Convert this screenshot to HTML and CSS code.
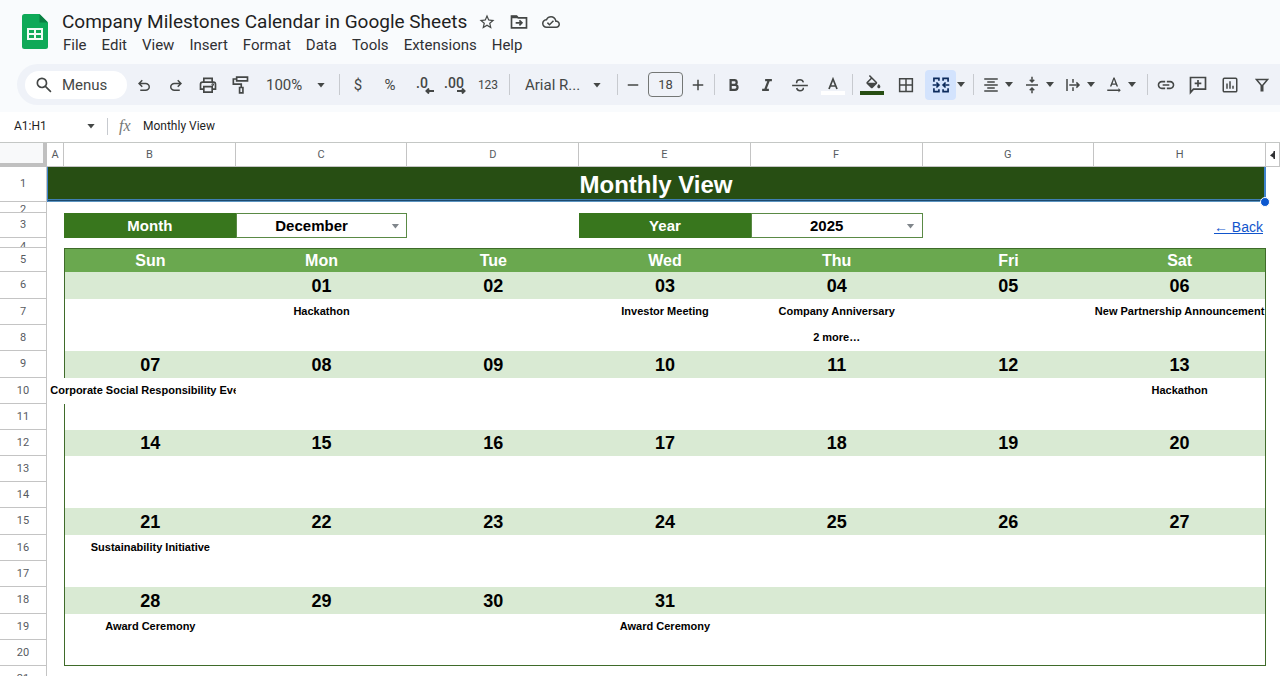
FILE: index.html
```html
<!DOCTYPE html>
<html lang="en">
<head>
<meta charset="utf-8">
<meta name="viewport" content="width=device-width, initial-scale=1">
<title>Company Milestones Calendar in Google Sheets</title>
<link rel="stylesheet" href="styles.css">
</head>
<body>
<header class="top">
  <svg class="logo" viewBox="0 0 26 35" aria-hidden="true"><path fill="#0fa958" d="M2.500 0H17.500L26 8.500V32.500Q26 35 23.500 35H2.500Q0 35 0 32.500V2.500Q0 0 2.500 0Z"/><path fill="#0b8043" d="M17.500 0L26 8.500H17.500Z"/><path fill="#f1fbf5" fill-rule="evenodd" d="M5 14H21V26H5ZM7 16V19H12V16ZM14 16V19H19V16ZM7 21V24H12V21ZM14 21V24H19V21Z"/></svg>
  <div class="heading">
    <div class="title-row">
      <h1 class="title">Company Milestones Calendar in Google Sheets</h1>
      <button class="title-btn" aria-label="Star"><svg class="i18" viewBox="0 0 24 24"><path d="M22 9.240l-7.190-.62L12 2 9.190 8.630 2 9.240l5.460 4.730L5.820 21 12 17.270 18.180 21l-1.630-7.030L22 9.240zM12 15.400l-3.760 2.270 1-4.280-3.320-2.880 4.380-.38L12 6.100l1.710 4.040 4.380.38-3.320 2.880 1 4.280L12 15.400z"/></svg></button>
      <button class="title-btn" aria-label="Move"><svg class="i20 line" viewBox="0 0 24 24"><path d="M3 5H9L11 7H21V19H3Z"/><path d="M3 6H10" stroke-width="3"/><path d="M8 13H15M12.500 10L15.500 13L12.500 16"/></svg></button>
      <button class="title-btn" aria-label="Saved to Drive"><svg class="i18" viewBox="0 0 24 24"><path d="M19.350 10.040C18.670 6.590 15.640 4 12 4 9.110 4 6.600 5.640 5.350 8.040 2.340 8.360 0 10.910 0 14c0 3.310 2.690 6 6 6h13c2.760 0 5-2.240 5-5 0-2.640-2.050-4.780-4.650-4.960zM19 18H6c-2.210 0-4-1.790-4-4 0-2.050 1.530-3.760 3.560-3.970l1.070-.11.5-.95C8.080 7.140 9.940 6 12 6c2.620 0 4.880 1.860 5.390 4.430l.3 1.500 1.530.11c1.560.1 2.780 1.410 2.780 2.960 0 1.650-1.350 3-3 3zm-9-3.820l-2.090-2.090L6.500 13.500 10 17l6.010-6.010-1.410-1.410z"/></svg></button>
    </div>
    <nav class="menus">
      <button>File</button><button>Edit</button><button>View</button><button>Insert</button><button>Format</button><button>Data</button><button>Tools</button><button>Extensions</button><button>Help</button>
    </nav>
  </div>
</header>

<div class="toolbar" role="toolbar" aria-label="Main">
  <button class="search"><svg class="i20" viewBox="0 0 24 24"><path d="M19.600 21l-6.300-6.300q-.75.6-1.725.95T9.500 16q-2.725 0-4.612-1.888T3 9.500t1.888-4.612T9.500 3t4.613 1.888T16 9.500q0 1.100-.35 2.075T14.700 13.300l6.300 6.300zM9.500 14q1.875 0 3.188-1.312T14 9.500t-1.312-3.187T9.500 5T6.313 6.313T5 9.500t1.313 3.188T9.500 14"/></svg>Menus</button>
  <button class="tb" aria-label="Undo"><svg class="i18" viewBox="0 0 24 24"><path d="M7 20v-2h7.100q1.575 0 2.738-1T18 14.500T16.838 12T14.100 11H7.800l2.600 2.600L9 15L4 10l5-5l1.400 1.400L7.800 9h6.300q2.425 0 4.163 1.575T20 14.500t-1.737 3.925T14.100 20z"/></svg></button>
  <button class="tb" aria-label="Redo"><svg class="i18 flip" viewBox="0 0 24 24"><path d="M7 20v-2h7.100q1.575 0 2.738-1T18 14.500T16.838 12T14.100 11H7.800l2.600 2.600L9 15L4 10l5-5l1.400 1.400L7.800 9h6.300q2.425 0 4.163 1.575T20 14.500t-1.737 3.925T14.100 20z"/></svg></button>
  <button class="tb" aria-label="Print"><svg class="i20 line" viewBox="0 0 24 24"><path d="M7 8V4H17V8M7 17H3V11Q3 8.500 5.500 8.500H18.500Q21 8.500 21 11V17H17M7 14H17V20.500H7Z"/><circle cx="17.700" cy="11.500" r=".6"/></svg></button>
  <button class="tb" aria-label="Paint format"><svg class="i20 line" viewBox="0 0 24 24"><path d="M8 2.500H21V7H8ZM8 4.800H4V11H13.500V15M11.500 15H15.500V21.500H11.500Z"/></svg></button>
  <label class="pick zoom"><select aria-label="Zoom"><option>100%</option></select></label>
  <span class="sep"></span>
  <button class="tb txt">$</button>
  <button class="tb txt">%</button>
  <button class="tb dec" aria-label="Decrease decimal places">.0<svg viewBox="0 0 9 6"><path d="M9 3H2M4 .5L1.500 3L4 5.500"/></svg></button>
  <button class="tb dec" aria-label="Increase decimal places">.00<svg viewBox="0 0 9 6"><path d="M0 3H7M5 .5L7.500 3L5 5.500"/></svg></button>
  <button class="tb num">123</button>
  <span class="sep"></span>
  <label class="pick font"><select aria-label="Font"><option>Arial R...</option></select></label>
  <span class="sep"></span>
  <button class="tb step" aria-label="Decrease font size"><svg class="i18 line" viewBox="0 0 24 24"><path d="M5 12H19"/></svg></button>
  <input class="size" type="text" value="18" aria-label="Font size">
  <button class="tb step" aria-label="Increase font size"><svg class="i18 line" viewBox="0 0 24 24"><path d="M5 12H19M12 5V19"/></svg></button>
  <span class="sep"></span>
  <button class="tb mid" aria-label="Bold"><svg class="i18 line thick" viewBox="0 0 24 24"><path d="M7.500 5.500H12.500A3 3 0 0 1 12.500 11.700H7.500ZM7.500 11.700H13.300A3.400 3.400 0 0 1 13.300 18.500H7.500Z"/></svg></button>
  <button class="tb mid" aria-label="Italic"><svg class="i18 line thick" viewBox="0 0 24 24"><path d="M9.500 5.500H18.500M5.500 18.500H14.500M14.500 5.500L9.500 18.500"/></svg></button>
  <button class="tb mid" aria-label="Strikethrough"><svg class="i18 line" viewBox="0 0 24 24"><path d="M1.500 12.500H22.500M16.500 8.500Q15.500 5 12 5Q7.500 5 7.500 8.500V9.500M7.500 16Q8.500 19.500 12 19.500Q16.500 19.500 16.500 15.500"/></svg></button>
  <button class="tb mid colour" aria-label="Text color"><svg viewBox="0 0 24 20"><path d="M8 14L12 4L16 14M9.500 11H14.500" fill="none" stroke="#444746" stroke-width="1.700"/><rect class="swatch-text" x="0" y="16" width="24" height="4"/></svg></button>
  <span class="sep"></span>
  <button class="tb wide colour" aria-label="Fill color"><svg viewBox="0 0 24 20"><path transform="translate(4 0) scale(.78)" d="M16.560 8.940L7.620 0 6.210 1.410l2.380 2.380-5.150 5.150c-.59.59-.59 1.540 0 2.120l5.500 5.500c.29.29.68.44 1.060.44s.77-.15 1.060-.44l5.500-5.500c.59-.58.59-1.530 0-2.120zM5.210 10L10 5.210 14.790 10H5.210zM19 11.500s-2 2.170-2 3.500c0 1.100.9 2 2 2s2-.9 2-2c0-1.330-2-3.500-2-3.500z"/><rect class="swatch-fill" x="0" y="16" width="24" height="4"/></svg></button>
  <button class="tb wide" aria-label="Borders"><svg class="i18 line" viewBox="0 0 24 24"><path d="M3.500 3.500H20.500V20.500H3.500ZM12 3.500V20.500M3.500 12H20.500"/></svg></button>
  <button class="merge" aria-label="Merge cells"><svg class="i20 line" viewBox="0 0 24 24"><path d="M9.500 7V4H3.500V8M3.500 16V20H9.500V17M14.500 7V4H20.500V8M20.500 16V20H14.500V17M2 12H9M6.500 9L9.500 12L6.500 15M22 12H15M17.500 9L14.500 12L17.500 15"/></svg></button>
  <button class="caret" aria-label="Merge type"></button>
  <span class="sep far"></span>
  <button class="combo" aria-label="Horizontal align"><svg class="i18" viewBox="0 0 24 24"><path d="M7 15v2h10v-2H7zm-4 6h18v-2H3v2zm0-8h18v-2H3v2zm4-6v2h10V7H7zM3 3v2h18V3H3z"/></svg></button>
  <button class="combo" aria-label="Vertical align"><svg class="i18 line" viewBox="0 0 24 24"><path d="M4 12H20M12 1V8M9 5L12 8L15 5M12 23V16M9 19L12 16L15 19"/></svg></button>
  <button class="combo" aria-label="Text wrapping"><svg class="i18 line" viewBox="0 0 24 24"><path d="M4 4V20M12 4V9M12 15V20M7 12H19M16.500 8.500L20 12L16.500 15.500"/></svg></button>
  <button class="combo" aria-label="Text rotation"><svg class="i18" viewBox="0 0 24 24"><path d="M21 19l-3-3v2H3v2h15v2l3-3zM9.500 11.800h5l.9 2.200h2.100L12.750 2h-1.500L6.500 14h2.100l.9-2.200zM12 4.500L13.870 10h-3.740L12 4.500z"/></svg></button>
  <span class="sep far"></span>
  <button class="tb" aria-label="Insert link"><svg class="i20" viewBox="0 0 24 24"><path d="M3.900 12c0-1.710 1.390-3.100 3.100-3.100h4V7H7c-2.760 0-5 2.240-5 5s2.240 5 5 5h4v-1.900H7c-1.710 0-3.100-1.390-3.100-3.100zM8 13h8v-2H8v2zm9-6h-4v1.900h4c1.710 0 3.100 1.390 3.100 3.100s-1.390 3.100-3.100 3.100h-4V17h4c2.760 0 5-2.240 5-5s-2.240-5-5-5z"/></svg></button>
  <button class="tb" aria-label="Insert comment"><svg class="i20 line" viewBox="0 0 24 24"><path d="M3 21V3H21V17H6.500ZM12 6V14M8 10H16"/></svg></button>
  <button class="tb" aria-label="Insert chart"><svg class="i18 line" viewBox="0 0 24 24"><path d="M4.500 3H19.500Q21 3 21 4.500V19.500Q21 21 19.500 21H4.500Q3 21 3 19.500V4.500Q3 3 4.500 3ZM8 10V17M12 7V17M16 13V17"/></svg></button>
  <button class="tb" aria-label="Create a filter"><svg class="i18 line" viewBox="0 0 24 24"><path d="M4.500 4.500H19.500L13 12.500V19.500H11V12.500Z"/></svg></button>
</div>

<div class="formula">
  <input class="name-box" type="text" value="A1:H1" aria-label="Name box">
  <button class="caret" aria-label="Named ranges"></button>
  <span class="formula-sep"></span>
  <label class="fx" for="formula">fx</label>
  <input class="formula-input" id="formula" type="text" value="Monthly View">
</div>

<main class="sheet">
<table class="grid">
  <colgroup><col class="c-head"><col class="c-a"><col><col><col><col><col><col><col><col class="c-i"></colgroup>
  <thead>
    <tr class="letters"><td class="corner"></td><th>A</th><th>B</th><th>C</th><th>D</th><th>E</th><th>F</th><th>G</th><th>H</th><th><svg class="hidden-col" viewBox="0 0 6 8" role="img" aria-label="Hidden columns"><path d="M4 1V7L0 4.500Z"/><path d="M3.500 0H5V8H3.500Z"/></svg></th></tr>
  </thead>
  <tbody>
    <tr class="r-title"><th>1</th><td colspan="8" class="banner">Monthly View<span class="handle"></span></td><td></td></tr>
    <tr class="r-gap"><th><div class="cut">2</div></th><td colspan="9"></td></tr>
    <tr class="r-pick"><th>3</th><td></td><td class="lab">Month</td><td class="sel"><label class="pick"><select aria-label="Month"><option>December</option></select></label></td><td></td><td class="lab">Year</td><td class="sel"><label class="pick"><select aria-label="Year"><option>2025</option></select></label></td><td></td><td class="back"><a href="#">← Back</a></td><td></td></tr>
    <tr class="r-gap small"><th><div class="cut">4</div></th><td colspan="9"></td></tr>
    <tr class="r-days"><th>5</th><td></td><td class="first">Sun</td><td>Mon</td><td>Tue</td><td>Wed</td><td>Thu</td><td>Fri</td><td class="last">Sat</td><td></td></tr>
    <tr class="r-date tall"><th>6</th><td></td><td class="first"></td><td>01</td><td>02</td><td>03</td><td>04</td><td>05</td><td class="last">06</td><td></td></tr>
    <tr class="r-event"><th>7</th><td></td><td class="first"></td><td>Hackathon</td><td></td><td>Investor Meeting</td><td>Company Anniversary</td><td></td><td class="last">New Partnership Announcement</td><td></td></tr>
    <tr class="r-event"><th>8</th><td></td><td class="first"></td><td></td><td></td><td></td><td>2 more…</td><td></td><td class="last"></td><td></td></tr>
    <tr class="r-date tall"><th>9</th><td></td><td class="first">07</td><td>08</td><td>09</td><td>10</td><td>11</td><td>12</td><td class="last">13</td><td></td></tr>
    <tr class="r-event"><th>10</th><td></td><td class="spill"><div>Corporate Social Responsibility Event</div></td><td></td><td></td><td></td><td></td><td></td><td class="last">Hackathon</td><td></td></tr>
    <tr class="r-event"><th>11</th><td></td><td class="first"></td><td></td><td></td><td></td><td></td><td></td><td class="last"></td><td></td></tr>
    <tr class="r-date"><th>12</th><td></td><td class="first">14</td><td>15</td><td>16</td><td>17</td><td>18</td><td>19</td><td class="last">20</td><td></td></tr>
    <tr class="r-event"><th>13</th><td></td><td class="first"></td><td></td><td></td><td></td><td></td><td></td><td class="last"></td><td></td></tr>
    <tr class="r-event"><th>14</th><td></td><td class="first"></td><td></td><td></td><td></td><td></td><td></td><td class="last"></td><td></td></tr>
    <tr class="r-date tall"><th>15</th><td></td><td class="first">21</td><td>22</td><td>23</td><td>24</td><td>25</td><td>26</td><td class="last">27</td><td></td></tr>
    <tr class="r-event"><th>16</th><td></td><td class="first">Sustainability Initiative</td><td></td><td></td><td></td><td></td><td></td><td class="last"></td><td></td></tr>
    <tr class="r-event"><th>17</th><td></td><td class="first"></td><td></td><td></td><td></td><td></td><td></td><td class="last"></td><td></td></tr>
    <tr class="r-date tall"><th>18</th><td></td><td class="first">28</td><td>29</td><td>30</td><td>31</td><td></td><td></td><td class="last"></td><td></td></tr>
    <tr class="r-event"><th>19</th><td></td><td class="first">Award Ceremony</td><td></td><td></td><td>Award Ceremony</td><td></td><td></td><td class="last"></td><td></td></tr>
    <tr class="r-event end"><th>20</th><td></td><td class="first"></td><td></td><td></td><td></td><td></td><td></td><td class="last"></td><td></td></tr>
    <tr class="r-event"><th>21</th><td colspan="9"></td></tr>
  </tbody>
</table>
</main>
</body>
</html>
```
FILE: styles.css
```css
* { box-sizing: border-box; }

body {
  margin: 0;
  height: 100vh;
  display: flex;
  flex-direction: column;
  overflow: hidden;
  background: #f9fbfd;
  color: #1f1f1f;
  font-family: Roboto, "Liberation Sans", sans-serif;
}

button, input, select {
  margin: 0;
  padding: 0;
  border: 0;
  background: none;
  color: inherit;
  font: inherit;
}

select { appearance: none; }

svg { display: block; fill: #444746; flex: none; }
.i18 { width: 18px; height: 18px; }
.i20 { width: 20px; height: 20px; }
.line { fill: none; stroke: #444746; stroke-width: 2; }
.thick { stroke-width: 3; }
.flip { transform: scaleX(-1); }

/* Title and menus */
.top { display: flex; gap: 14px; padding: 10px 22px 0; }
.logo { width: 26px; height: 35px; margin-top: 4px; }
.title-row { display: flex; align-items: center; height: 24px; }
.title { margin: 0 11px 0 0; font-size: 19px; font-weight: 400; line-height: 24px; white-space: nowrap; }
.title-btn { margin-right: 13px; }
.menus { display: flex; gap: 15px; height: 30px; padding: 1px 0 0 1px; align-items: flex-start; }
.menus button { font-size: 15px; line-height: 20px; color: #303134; }

/* Toolbar */
.toolbar {
  display: flex;
  align-items: center;
  flex: none;
  height: 41px;
  margin-left: 17px;
  padding-left: 8px;
  background: #eff2f8;
  border-radius: 21px 0 0 21px;
  color: #444746;
  overflow: hidden;
}
.search {
  display: flex;
  align-items: center;
  gap: 8px;
  width: 102px;
  height: 28px;
  margin-right: 1px;
  padding-left: 9px;
  border-radius: 14px;
  background: #fff;
  font-size: 15px;
}
.tb { display: flex; flex: none; align-items: center; justify-content: center; width: 32px; height: 30px; }
.txt { font-size: 15px; }
.num { width: 36px; font-size: 12px; }
.step { width: 26px; }
.mid { width: 33px; }
.wide { width: 34px; }
.dec { position: relative; align-items: flex-start; padding-top: 4px; font-size: 14px; line-height: 18px; font-weight: 500; }
.dec svg { position: absolute; right: 4px; bottom: 6px; width: 9px; height: 6px; fill: none; stroke: #444746; stroke-width: 2; }
.colour svg { width: 24px; height: 20px; }
.swatch-text { fill: #fff; }
.swatch-fill { fill: #274e13; }

.sep { flex: none; width: 6px; height: 21px; background: linear-gradient(#c7cacf, #c7cacf) center / 1px 100% no-repeat; }
.far { margin-left: 4px; }

.pick { position: relative; display: block; }
.pick select { width: 100%; }
.pick::after, .caret::after, .combo::after {
  content: "";
  flex: none;
  width: 8px;
  height: 5px;
  background: #444746;
  clip-path: polygon(0 0, 100% 0, 50% 100%);
}
.pick::after { position: absolute; right: 11px; top: 50%; margin-top: -2px; pointer-events: none; }
.zoom, .font { flex: none; width: 80px; font-size: 15px; }
.zoom select { padding-left: 10px; }
.font { width: 102px; }
.font select { padding-left: 13px; }
.font::after { right: 13px; }

.size {
  flex: none;
  width: 35px;
  height: 25px;
  margin: 0 2px;
  border: 1px solid #747775;
  border-radius: 4px;
  font-size: 13px;
  text-align: center;
}

.merge {
  display: flex;
  flex: none;
  align-items: center;
  justify-content: center;
  width: 31px;
  height: 30px;
  margin-left: 2px;
  border-radius: 4px;
  background: #d3e3fd;
}
.merge svg { stroke: #0b2a5c; }
.caret { display: flex; flex: none; align-items: center; justify-content: center; width: 10px; height: 20px; }
.combo { display: flex; flex: none; align-items: center; gap: 5px; width: 41px; height: 30px; padding-left: 6px; }

/* Formula bar */
.formula {
  display: flex;
  align-items: center;
  flex: none;
  height: 31px;
  margin-top: 7px;
  padding: 0 0 2px 14px;
  background: #fff;
  border-bottom: 1px solid #c4c7c5;
  font-size: 12px;
}
.name-box { width: 72px; height: 20px; }
.formula-sep { width: 1px; height: 17px; margin: 0 11px; background: #c7cacf; }
.fx { font: italic 16px/20px "Liberation Serif", serif; color: #747775; width: 24px; }
.formula-input { flex: 1; height: 20px; }

/* Sheet */
.sheet { flex: 1; min-height: 0; overflow: hidden; background: #fff; }
.grid { width: 100%; table-layout: fixed; border-collapse: separate; border-spacing: 0; }
.c-head { width: 47px; }
.c-a { width: 17px; }
.c-i { width: 14px; }
.grid th, .grid td { padding: 0; text-align: center; vertical-align: middle; white-space: nowrap; }
.grid th {
  border: 0 solid #c4c4c4;
  border-width: 0 1px 1px 0;
  font-size: 11px;
  line-height: 12px;
  font-weight: 400;
  color: #575b5f;
}
.letters { height: 24px; }
.corner { background: #f8f9fa; border-right: 4px solid #c0c0c0; border-bottom: 4px solid #c0c0c0; }
.hidden-col { width: 6px; height: 8px; margin: 0 auto; fill: #303134; }

.grid td { font-family: "Liberation Sans", Arial, sans-serif; font-weight: 700; color: #000; }

.r-title { height: 35px; }
.grid .banner {
  position: relative;
  background: linear-gradient(#3f7fb3 33%, #1d4a6e 33% 66%, #5b94c0 66%) bottom / 100% 3px no-repeat #274e13;
  border: 0 solid #3f83cc;
  border-width: 0 2px 0 1px;
  color: #fff;
  font-size: 24px;
  line-height: 28px;
}
.handle {
  position: absolute;
  right: -6px;
  bottom: -5px;
  width: 10px;
  height: 10px;
  border: 1px solid #fff;
  border-radius: 50%;
  background: #0b57d0;
}

.r-gap { height: 11px; }
.r-gap.small { height: 10px; }
.cut { height: 10px; padding-top: 2px; overflow: hidden; }
.small .cut { height: 9px; padding-top: 3px; }

.r-pick { height: 25px; }
.grid .lab { background: #38761d; color: #fff; font-size: 15px; }
.grid .sel { border: 1px solid #5a8a45; font-size: 15px; }
.sel select { height: 23px; padding-right: 20px; text-align-last: center; }
.sel .pick::after { right: 7px; background: #80868b; }
.grid .back { padding: 2px 3px 0 0; text-align: right; font-size: 14px; font-weight: 400; }
.back a { color: #1155cc; }

.r-days { height: 24px; }
.grid .r-days td { font-size: 16px; line-height: 20px; color: #fff; }
.r-days td:nth-child(n+3):nth-child(-n+9) { background: #6aa84f; border-top: 1px solid #3f6b2a; }
.r-date { height: 26px; }
.tall { height: 27px; }
.r-date td { font-size: 18px; line-height: 22px; }
.r-date td:nth-child(n+3):nth-child(-n+9) { background: #d9ead3; }
.r-event { height: 26px; }
.grid .r-event td { padding-bottom: 2px; font-size: 11px; line-height: 14px; }
.grid .first { border-left: 1px solid #3f6b2a; }
.grid .last { border-right: 1px solid #3f6b2a; }
.end td:nth-child(n+3):nth-child(-n+9) { border-bottom: 1px solid #3f6b2a; }

/* Long label runs over column A and stops at the edge of column C */
.spill { clip-path: inset(0 0 0 -16px); }
.spill div { display: flex; justify-content: center; }
```
